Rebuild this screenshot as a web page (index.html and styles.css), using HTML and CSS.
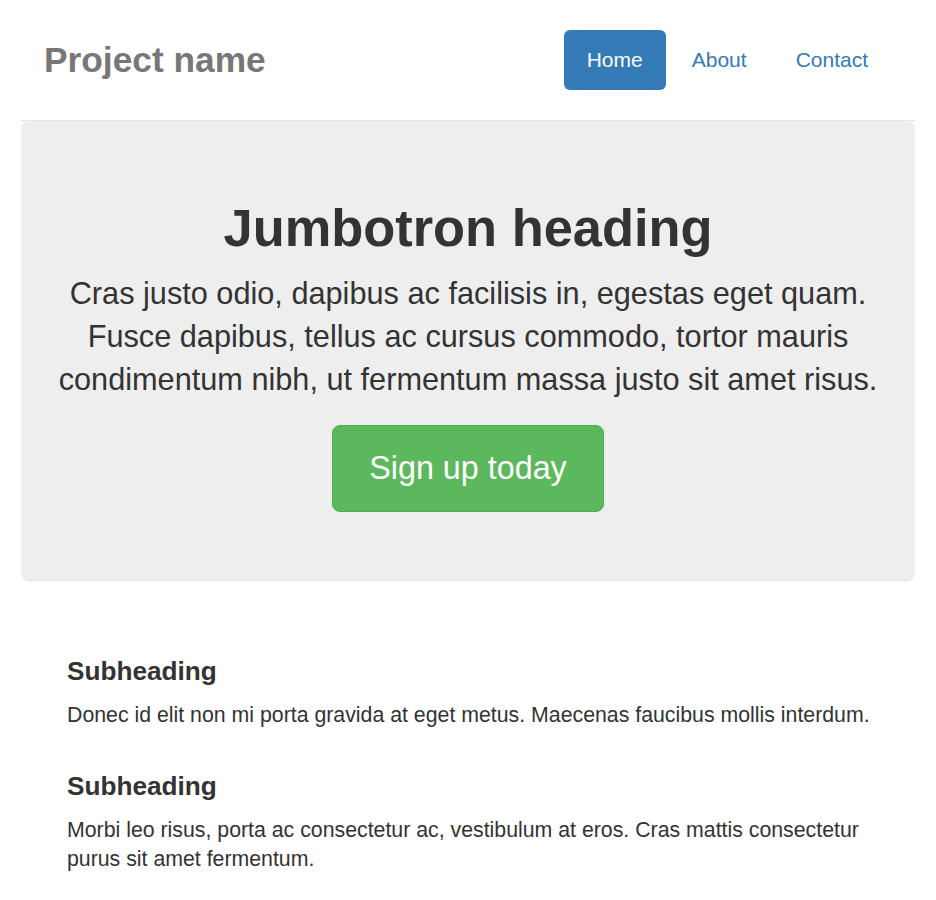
FILE: index.html
```html
<!DOCTYPE html>
<html lang="en">
<head>
<meta charset="UTF-8" />
<meta name="viewport" content="width=device-width, initial-scale=1" />
<title>Narrow Jumbotron</title>
<link rel="stylesheet" href="styles.css">
</head>
<body>

<div class="container">
  <div class="header">
    <h3 class="brand">Project name</h3>
    <ul class="nav-pills">
      <li class="active"><a href="#">Home</a></li>
      <li><a href="#">About</a></li>
      <li><a href="#">Contact</a></li>
    </ul>
  </div>

  <div class="jumbotron">
    <h1>Jumbotron heading</h1>
    <p class="lead">Cras justo odio, dapibus ac facilisis in, egestas eget quam. Fusce dapibus, tellus ac cursus commodo, tortor mauris condimentum nibh, ut fermentum massa justo sit amet risus.</p>
    <p><a class="btn-success" href="#">Sign up today</a></p>
  </div>

  <div class="marketing">
    <h4>Subheading</h4>
    <p>Donec id elit non mi porta gravida at eget metus. Maecenas faucibus mollis interdum.</p>

    <h4>Subheading</h4>
    <p>Morbi leo risus, porta ac consectetur ac, vestibulum at eros. Cras mattis consectetur purus sit amet fermentum.</p>
  </div>
</div>

</body>
</html>
```

FILE: styles.css
```css
* {
  box-sizing: border-box;
}
body {
  margin: 0;
  font-family: "Liberation Sans", Arial, sans-serif;
  font-size: 21.3px;
  line-height: 29px;
  color: #333;
  background: #fff;
}
a {
  text-decoration: none;
}
.container {
  padding: 0 21px;
}
.header {
  display: flex;
  justify-content: space-between;
  align-items: center;
  padding: 30px 24px 30px 23px;
  border-bottom: 1px solid #e5e5e5;
}
.brand {
  margin: 0;
  font-size: 35.3px;
  line-height: 56px;
  font-weight: 700;
  color: #777;
}
.nav-pills {
  display: flex;
  margin: 0;
  padding: 0;
  list-style: none;
}
.nav-pills li + li {
  margin-left: 3px;
}
.nav-pills a {
  display: block;
  padding: 16px 23px;
  font-size: 21px;
  line-height: 28px;
  color: #337ab7;
  border-radius: 6px;
}
.nav-pills .active a {
  background: #337ab7;
  color: #fff;
}
.jumbotron {
  text-align: center;
  background: #eee;
  border-radius: 8px;
  border-bottom: 1px solid #e5e5e5;
  padding: 79px 30px 68px;
}
.jumbotron h1 {
  margin: 0 0 15px;
  font-size: 52.4px;
  line-height: 57px;
  font-weight: 700;
  color: #333;
}
.jumbotron p {
  margin: 0 0 14px;
}
.lead {
  font-size: 30.7px;
  line-height: 43px;
  font-weight: 400;
}
.jumbotron p:last-child {
  margin: 24px 0 0;
}
.btn-success {
  display: inline-block;
  padding: 20px 36px;
  font-size: 32.3px;
  line-height: 45px;
  color: #fff;
  background: #5cb85c;
  border: 1px solid #4cae4c;
  border-radius: 8px;
}
.marketing {
  margin-top: 76px;
  padding: 0 24px 0 46px;
}
.marketing h4 {
  margin: 14px 0 15px;
  font-size: 26.2px;
  line-height: 29px;
  font-weight: 700;
}
.marketing p {
  margin: 0 0 14px;
}
.marketing p + h4 {
  margin-top: 42px;
}
```
